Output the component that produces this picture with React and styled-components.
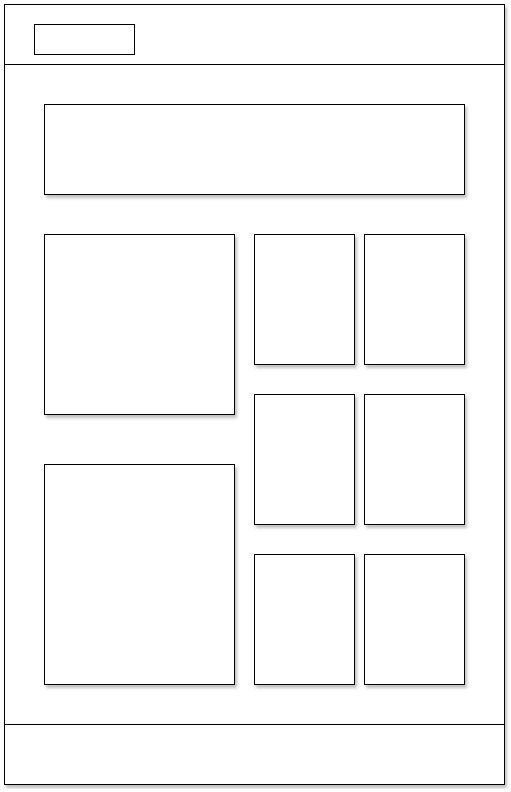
import styled, { createGlobalStyle } from 'styled-components';

const GlobalStyle = createGlobalStyle`
  * {
    box-sizing: border-box;
  }
  body {
    margin: 0;
    background: #fff;
    font-family: "Liberation Sans", Arial, sans-serif;
  }
`;

const Frame = styled.div`
  margin: 4px;
  width: 501px;
  height: 781px;
  border: 1px solid #000;
  background: #fff;
  box-shadow: 2px 3px 3px rgba(0, 0, 0, 0.25);
  display: flex;
  flex-direction: column;
`;

const Header = styled.header`
  height: 60px;
  border-bottom: 1px solid #000;
  padding: 19px 29px;
`;

const Logo = styled.div`
  width: 101px;
  height: 31px;
  border: 1px solid #000;
`;

const Main = styled.main`
  flex: 1;
  padding: 39px;
  display: flex;
  flex-direction: column;
  gap: 39px;
`;

const Footer = styled.footer`
  height: 60px;
  border-top: 1px solid #000;
`;

const Box = styled.div`
  border: 1px solid #000;
  background: #fff;
  box-shadow: 2px 3px 3px rgba(0, 0, 0, 0.25);
  width: ${(p) => p.$w}px;
  height: ${(p) => p.$h}px;
`;

const Content = styled.div`
  display: flex;
  gap: 19px;
`;

const LeftColumn = styled.div`
  display: flex;
  flex-direction: column;
  gap: 49px;
`;

const Tiles = styled.div`
  display: grid;
  grid-template-columns: 101px 101px;
  grid-auto-rows: 131px;
  column-gap: 9px;
  row-gap: 29px;
`;

const App = () => {
  const tiles = [1, 2, 3, 4, 5, 6];

  return (
    <>
      <GlobalStyle />
      <Frame>
        <Header>
          <Logo />
        </Header>
        <Main>
          <Box $w={421} $h={91} />
          <Content>
            <LeftColumn>
              <Box $w={191} $h={181} />
              <Box $w={191} $h={221} />
            </LeftColumn>
            <Tiles>
              {tiles.map((t) => (
                <Box key={t} $w={101} $h={131} />
              ))}
            </Tiles>
          </Content>
        </Main>
        <Footer />
      </Frame>
    </>
  );
};

export default App;
